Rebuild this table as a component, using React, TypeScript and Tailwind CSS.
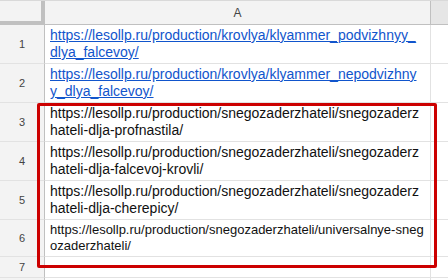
const rows = [
  { n: 1, h: 'h-[39px]', link: true, lines: ['https://lesollp.ru/production/krovlya/klyammer_podvizhnyy_', 'dlya_falcevoy/'] },
  { n: 2, h: 'h-[39px]', link: true, lines: ['https://lesollp.ru/production/krovlya/klyammer_nepodvizhny', 'y_dlya_falcevoy/'] },
  { n: 3, h: 'h-[39px]', link: false, lines: ['https://lesollp.ru/production/snegozaderzhateli/snegozaderz', 'hateli-dlja-profnastila/'] },
  { n: 4, h: 'h-[39px]', link: false, lines: ['https://lesollp.ru/production/snegozaderzhateli/snegozaderz', 'hateli-dlja-falcevoj-krovli/'] },
  { n: 5, h: 'h-[39px]', link: false, lines: ['https://lesollp.ru/production/snegozaderzhateli/snegozaderz', 'hateli-dlja-cherepicy/'] },
  { n: 6, h: 'h-[37px]', link: false, small: true, lines: ['https://lesollp.ru/production/snegozaderzhateli/universalnye-sneg', 'ozaderzhateli/'] },
];

export default function App() {
  return (
    <div className="relative w-[448px] h-[280px] overflow-hidden bg-white font-['Liberation_Sans',Arial,sans-serif]">
      {/* column header */}
      <div className="flex h-[25px] border-t border-[#d9d9d9]">
        <div className="w-[45px] shrink-0 bg-[#f3f3f3] border-r-4 border-b-4 border-[#c0c0c0]" />
        <div className="w-[386px] shrink-0 flex items-center justify-center bg-[#f3f3f3] border-r border-b border-[#c0c0c0] text-[12px] text-[#444]">
          A
        </div>
        <div className="flex-1 bg-[#e6e6e6] border-b border-[#c0c0c0]" />
      </div>

      {rows.map((r) => (
        <div key={r.n} className={`flex ${r.h}`}>
          <div className="w-[45px] shrink-0 flex items-center justify-center bg-[#f3f3f3] border-r border-r-[#c0c0c0] border-b border-b-[#e2e2e2] text-[11px] text-[#444]">
            {r.n}
          </div>
          <div
            className={`w-[386px] shrink-0 flex flex-col justify-center pl-[5px] border-r border-b border-[#e2e2e2] ${
              r.small ? 'text-[13px] leading-[16px]' : 'text-[14px] leading-[17px]'
            } ${r.link ? 'text-[#1155cc] underline' : 'text-[#111]'}`}
          >
            {r.lines.map((l) => (
              <span key={l} className="whitespace-nowrap">{l}</span>
            ))}
          </div>
          <div className="flex-1 border-b border-[#e2e2e2]" />
        </div>
      ))}

      <div className="flex h-[21px]">
        <div className="w-[45px] shrink-0 flex items-center justify-center bg-[#f3f3f3] border-r border-r-[#c0c0c0] border-b border-b-[#e2e2e2] text-[11px] text-[#444]">
          7
        </div>
        <div className="w-[386px] shrink-0 border-r border-b border-[#e2e2e2]" />
        <div className="flex-1 border-b border-[#e2e2e2]" />
      </div>
      <div className="flex h-[20px]">
        <div className="w-[45px] shrink-0 bg-[#f3f3f3] border-r border-[#c0c0c0]" />
        <div className="w-[386px] shrink-0 border-r border-[#e2e2e2]" />
      </div>

      {/* highlight box around rows 3-6 */}
      <div className="absolute left-[37px] top-[103px] w-[400px] h-[165px] border-[3px] border-[#cc0000] rounded-[2px]" />
    </div>
  );
}
